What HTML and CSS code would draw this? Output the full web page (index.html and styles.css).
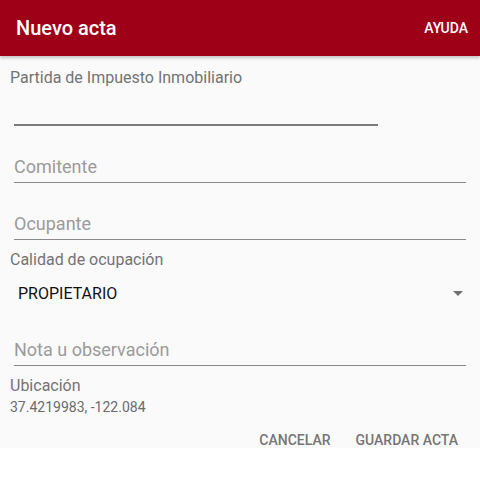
FILE: index.html
```html
<!DOCTYPE html>
<html lang="es">
<head>
<meta charset="utf-8">
<title>Nuevo acta</title>
<link rel="stylesheet" href="styles.css">
</head>
<body>
<header class="appbar">
  <h1 class="title">Nuevo acta</h1>
  <span class="action">AYUDA</span>
</header>
<main class="form">
  <label class="label label-first">Partida de Impuesto Inmobiliario</label>
  <div class="input input-short"></div>
  <div class="input input-text input-comitente">Comitente</div>
  <div class="input input-text input-ocupante">Ocupante</div>
  <label class="label label-calidad">Calidad de ocupación</label>
  <div class="spinner">
    <span class="spinner-value">PROPIETARIO</span>
    <svg class="spinner-arrow" width="10" height="5" viewBox="0 0 10 5"><path d="M0 0h10L5 5z" fill="#6f6f6f"/></svg>
  </div>
  <div class="input input-text input-nota">Nota u observación</div>
  <label class="label label-ubic">Ubicación</label>
  <div class="coords">37.4219983, -122.084</div>
  <div class="buttons">
    <span class="btn">CANCELAR</span>
    <span class="btn">GUARDAR ACTA</span>
  </div>
</main>
</body>
</html>
```
FILE: styles.css
```css
html, body {
  margin: 0;
  padding: 0;
  background: #ffffff;
  font-family: Roboto, "Noto Sans", sans-serif;
}
.appbar {
  height: 56px;
  background: #9d0017;
  display: flex;
  align-items: center;
  justify-content: space-between;
  padding: 0 12px 0 16px;
  box-shadow: 0 2px 3px rgba(0,0,0,0.22);
  position: relative;
  z-index: 1;
}
.title {
  margin: 0;
  font-size: 20px;
  font-weight: 500;
  color: #ffffff;
}
.action {
  font-size: 14px;
  font-weight: 500;
  color: #ffffff;
}
.form {
  background: #fafafa;
  height: 392px;
  overflow: hidden;
  box-sizing: border-box;
  padding: 12px 14px 0 10px;
  display: flex;
  flex-direction: column;
}
.label {
  display: block;
  font-size: 16px;
  line-height: 20px;
  color: #737373;
}
.input {
  margin-left: 4px;
  border-bottom: 1px solid #8a8a8a;
}
.input-short {
  width: 364px;
  height: 36px;
  border-bottom: 2px solid #7b7b7b;
}
.input-text {
  font-size: 18px;
  line-height: 24px;
  color: #9b9b9b;
  padding-bottom: 3px;
}
.input-comitente { margin-top: 29px; }
.input-ocupante { margin-top: 29px; }
.label-calidad { margin-top: 10px; }
.spinner {
  height: 48px;
  display: flex;
  align-items: center;
  justify-content: space-between;
  padding: 0 3px 0 8px;
}
.spinner-value {
  font-size: 16px;
  color: #111111;
}
.input-nota { margin-top: 21px; }
.label-ubic { margin-top: 10px; }
.coords {
  font-size: 14px;
  line-height: 18px;
  margin-top: 2px;
  color: #6b6b6b;
}
.buttons {
  display: flex;
  justify-content: flex-end;
  gap: 25px;
  margin-top: 16px;
  padding-right: 8px;
}
.btn {
  font-size: 14px;
  line-height: 16px;
  font-weight: 500;
  color: #757575;
}
```
